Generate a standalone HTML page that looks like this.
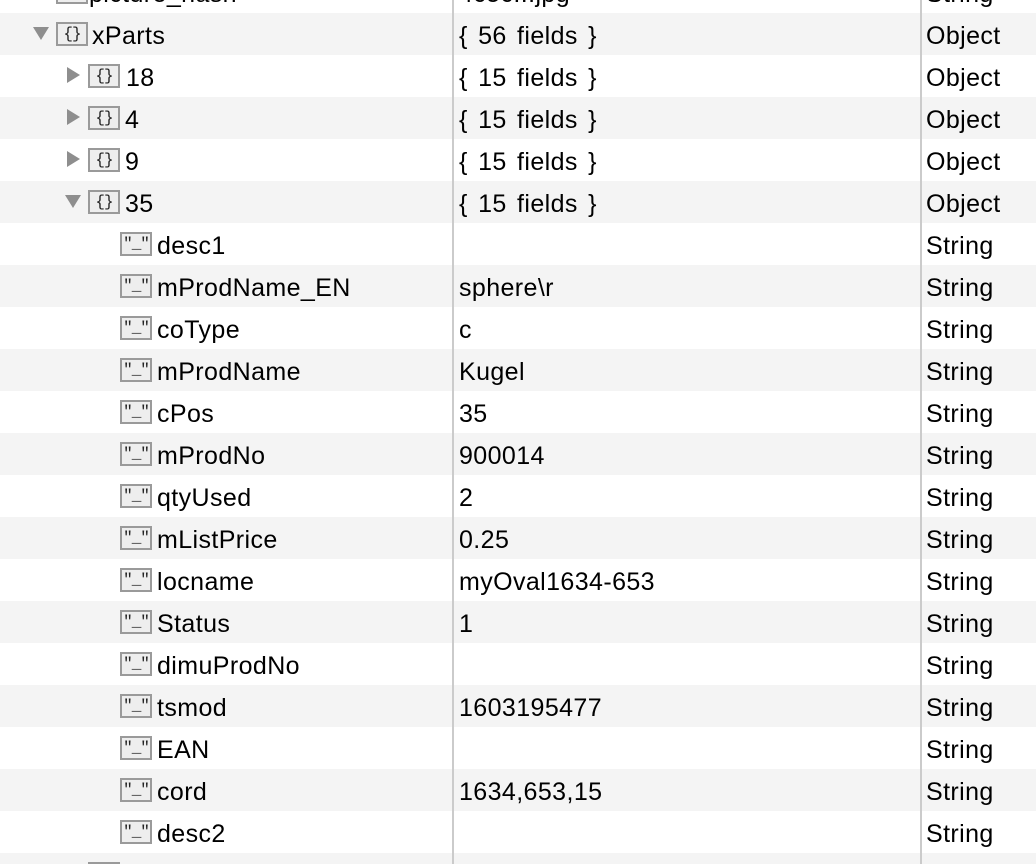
<!DOCTYPE html>
<html style="height:864px;overflow:hidden"><head><style>
body{margin:0;width:1036px;height:864px;overflow:hidden;background:#fff;font-family:"Liberation Sans",Arial,sans-serif;font-size:25px;letter-spacing:0.4px;word-spacing:3px;color:#000;position:relative}
.row{position:absolute;left:0;width:1036px;height:42px;overflow:hidden}
.g{background:#f4f4f4}
.t{position:absolute;top:2px;line-height:42px;white-space:nowrap}
.ic{position:absolute;top:9px;width:28px;height:20px;border:2px solid #9a9a9a;background:#eeeeee;font-size:16px;line-height:20px;text-align:center;font-family:"Liberation Mono",monospace;color:#222;letter-spacing:-1px;word-spacing:0}
.tri{position:absolute;width:0;height:0}
.tr{top:12px;border-top:8px solid transparent;border-bottom:8px solid transparent;border-left:13px solid #8e8e8e}
.td{top:14px;border-left:8px solid transparent;border-right:8px solid transparent;border-top:13px solid #8e8e8e}
.div{position:absolute;top:0;width:2px;height:864px;background:#cbcbcb}
</style></head><body>
<div class="row" style="top:-29px"><div class="ic" style="left:56px">"_"</div><div class="t" style="left:89px">picture_hash</div><div class="t" style="left:459px">4c5c...jpg</div><div class="t" style="left:926px">String</div></div>
<div class="row g" style="top:13px"><div class="tri td" style="left:33px"></div><div class="ic" style="left:56px">{}</div><div class="t" style="left:92px">xParts</div><div class="t" style="left:459px">{ 56 fields }</div><div class="t" style="left:926px">Object</div></div>
<div class="row" style="top:55px"><div class="tri tr" style="left:67px"></div><div class="ic" style="left:88px">{}</div><div class="t" style="left:126px">18</div><div class="t" style="left:459px">{ 15 fields }</div><div class="t" style="left:926px">Object</div></div>
<div class="row g" style="top:97px"><div class="tri tr" style="left:67px"></div><div class="ic" style="left:88px">{}</div><div class="t" style="left:125px">4</div><div class="t" style="left:459px">{ 15 fields }</div><div class="t" style="left:926px">Object</div></div>
<div class="row" style="top:139px"><div class="tri tr" style="left:67px"></div><div class="ic" style="left:88px">{}</div><div class="t" style="left:125px">9</div><div class="t" style="left:459px">{ 15 fields }</div><div class="t" style="left:926px">Object</div></div>
<div class="row g" style="top:181px"><div class="tri td" style="left:65px"></div><div class="ic" style="left:88px">{}</div><div class="t" style="left:125px">35</div><div class="t" style="left:459px">{ 15 fields }</div><div class="t" style="left:926px">Object</div></div>
<div class="row" style="top:223px"><div class="ic" style="left:120px">"_"</div><div class="t" style="left:157px">desc1</div><div class="t" style="left:926px">String</div></div>
<div class="row g" style="top:265px"><div class="ic" style="left:120px">"_"</div><div class="t" style="left:157px">mProdName_EN</div><div class="t" style="left:459px">sphere\r</div><div class="t" style="left:926px">String</div></div>
<div class="row" style="top:307px"><div class="ic" style="left:120px">"_"</div><div class="t" style="left:157px">coType</div><div class="t" style="left:459px">c</div><div class="t" style="left:926px">String</div></div>
<div class="row g" style="top:349px"><div class="ic" style="left:120px">"_"</div><div class="t" style="left:157px">mProdName</div><div class="t" style="left:459px">Kugel</div><div class="t" style="left:926px">String</div></div>
<div class="row" style="top:391px"><div class="ic" style="left:120px">"_"</div><div class="t" style="left:157px">cPos</div><div class="t" style="left:459px">35</div><div class="t" style="left:926px">String</div></div>
<div class="row g" style="top:433px"><div class="ic" style="left:120px">"_"</div><div class="t" style="left:157px">mProdNo</div><div class="t" style="left:459px">900014</div><div class="t" style="left:926px">String</div></div>
<div class="row" style="top:475px"><div class="ic" style="left:120px">"_"</div><div class="t" style="left:157px">qtyUsed</div><div class="t" style="left:459px">2</div><div class="t" style="left:926px">String</div></div>
<div class="row g" style="top:517px"><div class="ic" style="left:120px">"_"</div><div class="t" style="left:157px">mListPrice</div><div class="t" style="left:459px">0.25</div><div class="t" style="left:926px">String</div></div>
<div class="row" style="top:559px"><div class="ic" style="left:120px">"_"</div><div class="t" style="left:157px">locname</div><div class="t" style="left:459px">myOval1634-653</div><div class="t" style="left:926px">String</div></div>
<div class="row g" style="top:601px"><div class="ic" style="left:120px">"_"</div><div class="t" style="left:157px">Status</div><div class="t" style="left:459px">1</div><div class="t" style="left:926px">String</div></div>
<div class="row" style="top:643px"><div class="ic" style="left:120px">"_"</div><div class="t" style="left:157px">dimuProdNo</div><div class="t" style="left:926px">String</div></div>
<div class="row g" style="top:685px"><div class="ic" style="left:120px">"_"</div><div class="t" style="left:157px">tsmod</div><div class="t" style="left:459px">1603195477</div><div class="t" style="left:926px">String</div></div>
<div class="row" style="top:727px"><div class="ic" style="left:120px">"_"</div><div class="t" style="left:157px">EAN</div><div class="t" style="left:926px">String</div></div>
<div class="row g" style="top:769px"><div class="ic" style="left:120px">"_"</div><div class="t" style="left:157px">cord</div><div class="t" style="left:459px">1634,653,15</div><div class="t" style="left:926px">String</div></div>
<div class="row" style="top:811px"><div class="ic" style="left:120px">"_"</div><div class="t" style="left:157px">desc2</div><div class="t" style="left:926px">String</div></div>
<div class="row g" style="top:853px;height:11px"><div class="tri tr" style="left:67px"></div><div class="ic" style="left:88px">{}</div><div class="t" style="left:125px">12</div><div class="t" style="left:459px">{ 15 fields }</div><div class="t" style="left:926px">Object</div></div>
<div class="div" style="left:452px"></div>
<div class="div" style="left:920px"></div>
</body></html>
